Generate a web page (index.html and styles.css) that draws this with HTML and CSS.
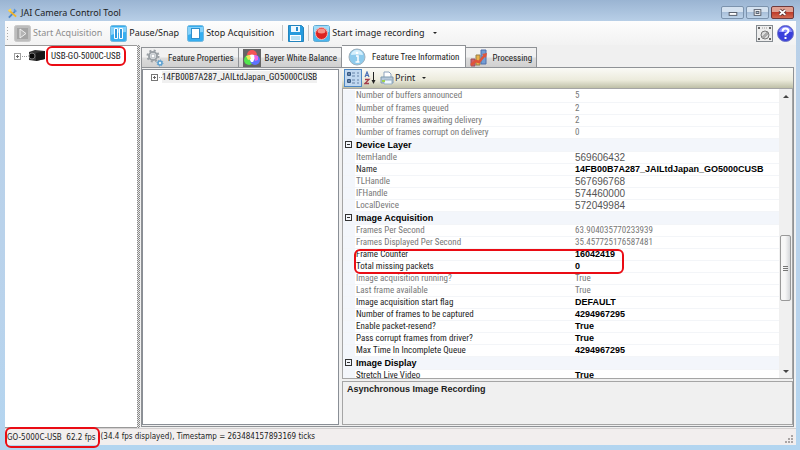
FILE: index.html
```html
<!DOCTYPE html>
<html lang="en">
<head>
<meta charset="utf-8">
<title>JAI Camera Control Tool</title>
<link rel="stylesheet" href="styles.css">
</head>
<body>
<div class="window">
  <header class="titlebar">
    <svg class="app-icon" viewBox="0 0 12 12"><path d="M2 11L9 4" stroke="#4f86c6" stroke-width="2"/><path d="M8 1l3 3-2 1-2-2z" fill="#5c96d6"/><path d="M2 3l8 7" stroke="#f0b429" stroke-width="2"/><path d="M1 3l3-2 1 2-2 2z" fill="#ffd34d"/></svg>
    <h1>JAI Camera Control Tool</h1>
    <div class="caption-buttons">
      <button aria-label="Minimize"><svg viewBox="0 0 22 11"><rect x="7.500" y="5.500" width="8" height="3" fill="#fff" stroke="#555c68"/></svg></button>
      <button aria-label="Maximize"><svg viewBox="0 0 22 11"><rect x="7.500" y="2.500" width="7" height="6" fill="#fff" stroke="#555c68"/><rect x="9.500" y="4.500" width="3" height="2" fill="#b9cee4" stroke="#555c68"/></svg></button>
      <button class="close" aria-label="Close"><svg viewBox="0 0 22 11"><path d="M8 3l6 5M14 3l-6 5" stroke="#5b3434" stroke-width="3.500"/><path d="M8 3l6 5M14 3l-6 5" stroke="#fff" stroke-width="2"/></svg></button>
    </div>
  </header>

  <div class="client">
    <nav class="toolbar" aria-label="Main">
      <span class="grip"></span>
      <button class="tool" disabled><svg viewBox="0 0 17 17"><rect x=".5" y=".5" width="16" height="16" rx="2" fill="#bdbdbd" stroke="#c9c9c9"/><rect x="3" y="3" width="11" height="11" fill="#a4a4a4"/><path d="M6 4v9l6-4.500z" fill="#b4b4b4" stroke="#eee"/></svg>Start Acquisition</button>
      <button class="tool"><svg viewBox="0 0 17 17"><rect x=".5" y=".5" width="16" height="16" rx="2" fill="#36aef0" stroke="#73b9df"/><path d="M1 2h15v5q-8 0-15 3z" fill="#85d2fb"/><path d="M4.500 3.500h3v10h-3zM9.500 3.500h3v10h-3z" fill="#3198db" stroke="#fff"/></svg>Pause/Snap</button>
      <button class="tool"><svg viewBox="0 0 17 17"><rect x=".5" y=".5" width="16" height="16" rx="2" fill="#36aef0" stroke="#73b9df"/><path d="M1 2h15v5q-8 0-15 3z" fill="#85d2fb"/><rect x="4.500" y="3.500" width="8" height="10" fill="#fff" stroke="#2f8fcc"/></svg>Stop Acquisition</button>
      <span class="sep"></span>
      <button class="tool" aria-label="Save"><svg viewBox="0 0 17 17"><path d="M1.500.5h13l2 2v14h-15z" fill="#279bdd" stroke="#2484bd"/><path d="M4 1h9v6H4z" fill="#eef9ff"/><path d="M9 2h2v4H9z" fill="#278acb"/><path d="M3 10h11v6H3z" fill="#fff"/><path d="M4 12h9M4 14h9" stroke="#72c3ea"/></svg></button>
      <span class="sep"></span>
      <button class="tool"><svg viewBox="0 0 17 17"><rect x=".5" y=".5" width="16" height="16" rx="2" fill="#4ab6ee" stroke="#5fa9d1"/><path d="M1 1h15v6H1z" fill="#9edcfa"/><circle cx="8.500" cy="8.500" r="6" fill="#dd2320" stroke="#f4b9b5"/><ellipse cx="8.500" cy="6" rx="4" ry="2.500" fill="#f69287"/></svg>Start image recording<span class="arrow"></span></button>
      <span class="spacer"></span>
      <button class="tool" aria-label="Settings"><svg viewBox="0 0 17 17"><rect x=".5" y=".5" width="16" height="16" fill="#eee" stroke="#858b90"/><circle cx="9" cy="10" r="4" fill="#ddd" stroke="#777"/><path d="M6.500 12l5-5M7.500 13l5-5" stroke="#777"/><path d="M2 3h2M13 3h2M2 14h2M13 14h2" stroke="#666" stroke-width="2"/><path d="M6 3h5" stroke="#999" stroke-dasharray="1 1"/></svg></button>
      <button class="tool" aria-label="Help"><svg viewBox="0 0 17 17"><circle cx="8.500" cy="8.500" r="8" fill="#3a3fdc" stroke="#7076c5"/><path d="M2 7a6.500 5.500 0 0 1 13 0z" fill="#898cff"/><path d="M5.500 6.500q0-3 3-3t3 2.500q0 1.500-3 3v1.500" fill="none" stroke="#fff" stroke-width="2"/><path d="M7.500 12h2v2h-2z" fill="#fff"/></svg></button>
    </nav>

    <main class="workspace">
      <aside class="devices">
        <div class="tree-item"><span class="expander"></span><svg class="camera" viewBox="0 0 18 12"><path d="M1 2l6-2 10 1v8l-9 2-7-1z" fill="#333"/><path d="M8 3l9-2v8l-9 2z" fill="#171717"/><circle cx="4" cy="6" r="3" fill="#090909" stroke="#777"/></svg><span class="marked">USB-GO-5000C-USB</span></div>
      </aside>
      <div class="splitter"></div>
      <section class="pages">
        <div class="tabs" role="tablist">
          <button role="tab" class="tab"><svg viewBox="0 0 18 18"><circle cx="7" cy="7" r="4" fill="#eceff1" stroke="#9aa0a5" stroke-width="2"/><circle cx="7" cy="7" r="5.500" fill="none" stroke="#9aa0a5" stroke-width="2" stroke-dasharray="2 2.320"/><circle cx="7" cy="7" r="2" fill="#fff" stroke="#b4b9be"/><circle cx="14" cy="14" r="2" fill="#e0f2fc" stroke="#5a9fd0" stroke-width="1.500"/><circle cx="14" cy="14" r="3" fill="none" stroke="#5a9fd0" stroke-dasharray="1 1.300"/></svg>Feature Properties</button>
          <button role="tab" class="tab"><svg viewBox="0 0 18 18"><path d="M0 0h18v18H0z" fill="#666"/><circle cx="9" cy="6" r="5" fill="#f45555"/><circle cx="6" cy="11" r="5" fill="#52e54e"/><circle cx="12" cy="11" r="5" fill="#5e74ff"/><path d="M5 7q4-3 8 0l-3 6H8z" fill="#fff"/><path d="M11 6l4 1v4l-3 1z" fill="#ee65e5"/><path d="M3 7l4-1 1 4-3 1z" fill="#f6e55b"/></svg>Bayer White Balance</button>
          <button role="tab" class="tab active" aria-selected="true"><svg viewBox="0 0 18 18"><circle cx="9" cy="9" r="8" fill="#8dcbed" stroke="#a1b2be"/><path d="M3 7a6 5 0 0 1 12 0q-6-1-12 0z" fill="#d5f0fd"/><path d="M8 8h2v6M7.500 14h4" fill="none" stroke="#fff" stroke-width="1.500"/><circle cx="9" cy="5" r="1.300" fill="#fff"/></svg>Feature Tree Information</button>
          <button role="tab" class="tab"><svg viewBox="0 0 18 18"><path d="M1 10h4v7H1z" fill="#d3606a" stroke="#985163"/><path d="M6 6h4v10H6z" fill="#ebb14a" stroke="#95804a"/><path d="M11 1h5v14h-5z" fill="#719ed5" stroke="#526fa9"/><path d="M1 16l5-4 3 1 6-7" fill="none" stroke="#df543a" stroke-width="2.500"/><path d="M12 5l5-1-1 5z" fill="#df543a"/></svg>Processing</button>
        </div>
        <div class="page">
          <div class="nodes"><div class="tree-item"><span class="expander dark"></span><span class="node">14FB00B7A287_JAILtdJapan_GO5000CUSB</span></div></div>
          <div class="inspector">
            <div class="gridbar">
              <button class="pressed" aria-label="Categorized"><svg viewBox="0 0 14 14"><path d="M1.500 1.500h3v3h-3zM1.500 8.500h3v3h-3z" fill="#fff" stroke="#365983"/><path d="M2 3h2M3 2v2M2 10h2M3 9v2" stroke="#365983"/><path d="M6 2h3M11 2h2M6 5h3M11 5h2M6 9h3M11 9h2M6 12h3M11 12h2" stroke="#6683a8"/></svg></button>
              <button aria-label="Sort alphabetically"><svg viewBox="0 0 14 14"><path d="M1 6l2-5 2 5M2 4.500h2" fill="none" stroke="#4b6fb5" stroke-width="1.200"/><path d="M1 8.500h4l-4 4h4" fill="none" stroke="#a33b49" stroke-width="1.300"/><path d="M9.500 1v10" stroke="#222"/><path d="M7.500 9h4l-2 4z" fill="#222"/></svg></button>
              <button class="print"><svg viewBox="0 0 14 14"><path d="M4 7V1h5l2 2v4" fill="#fff" stroke="#8da4bd"/><path d="M1 6h12v6H1z" fill="#b8cadb" stroke="#7f9aaf"/><path d="M4 9h8v4H4z" fill="#eff9ff" stroke="#98afc3"/><path d="M2 9h3v2H2z" fill="#9fd34d"/></svg>Print<span class="arrow"></span></button>
            </div>
            <div class="grid-box">
              <div class="rows">
                <div class="callout"></div>
                <table>
                  <colgroup><col class="c-gutter"><col class="c-name"><col></colgroup>
                  <tbody>
                    <tr class="ro"><td></td><td>Number of buffers announced</td><td>5</td></tr>
                    <tr class="ro"><td></td><td>Number of frames queued</td><td>2</td></tr>
                    <tr class="ro"><td></td><td>Number of frames awaiting delivery</td><td>2</td></tr>
                    <tr class="ro"><td></td><td>Number of frames corrupt on delivery</td><td>0</td></tr>
                    <tr class="cat"><td><span class="collapse"></span></td><th colspan="2">Device Layer</th></tr>
                    <tr class="ro strong"><td></td><td>ItemHandle</td><td>569606432</td></tr>
                    <tr><td></td><td>Name</td><td>14FB00B7A287_JAILtdJapan_GO5000CUSB</td></tr>
                    <tr class="ro strong"><td></td><td>TLHandle</td><td>567696768</td></tr>
                    <tr class="ro strong"><td></td><td>IFHandle</td><td>574460000</td></tr>
                    <tr class="ro strong"><td></td><td>LocalDevice</td><td>572049984</td></tr>
                    <tr class="cat"><td><span class="collapse"></span></td><th colspan="2">Image Acquisition</th></tr>
                    <tr class="ro"><td></td><td>Frames Per Second</td><td>63.904035770233939</td></tr>
                    <tr class="ro"><td></td><td>Frames Displayed Per Second</td><td>35.457725176587481</td></tr>
                    <tr><td></td><td>Frame Counter</td><td>16042419</td></tr>
                    <tr><td></td><td>Total missing packets</td><td>0</td></tr>
                    <tr class="ro"><td></td><td>Image acquisition running?</td><td>True</td></tr>
                    <tr class="ro"><td></td><td>Last frame available</td><td>True</td></tr>
                    <tr><td></td><td>Image acquisition start flag</td><td>DEFAULT</td></tr>
                    <tr><td></td><td>Number of frames to be captured</td><td>4294967295</td></tr>
                    <tr><td></td><td>Enable packet-resend?</td><td>True</td></tr>
                    <tr><td></td><td>Pass corrupt frames from driver?</td><td>True</td></tr>
                    <tr><td></td><td>Max Time In Incomplete Queue</td><td>4294967295</td></tr>
                    <tr class="cat"><td><span class="collapse"></span></td><th colspan="2">Image Display</th></tr>
                    <tr><td></td><td>Stretch Live Video</td><td>True</td></tr>
                  </tbody>
                </table>
              </div>
              <div class="scrollbar"><span class="up"></span><span class="track-top"></span><span class="thumb"></span><span class="track-bottom"></span><span class="down"></span></div>
            </div>
            <div class="description">Asynchronous Image Recording</div>
          </div>
        </div>
      </section>
    </main>

    <footer class="status">
      <span class="fps">GO-5000C-USB&nbsp; 62.2 fps</span><span>(34.4 fps displayed), Timestamp = 263484157893169 ticks</span>
      <svg class="size-grip" viewBox="0 0 9 9"><path d="M6 1h2M3 4h2M6 4h2M0 7h2M3 7h2M6 7h2" stroke="#aaa5a5" stroke-width="2"/></svg>
    </footer>
  </div>
</div>
</body>
</html>
```
FILE: styles.css
```css
* { box-sizing: border-box; }
body {
  margin: 0;
  font: 9px/12px "Roboto Condensed", "Liberation Sans", sans-serif;
  color: #1c1c1c;
}
button {
  font: inherit;
  color: inherit;
  background: none;
  border: 0;
  margin: 0;
  padding: 0;
  display: flex;
  align-items: center;
}
svg { flex: none; }
.window {
  height: 100vh;
  display: flex;
  flex-direction: column;
  padding: 0 4px 5px 5px;
  background: linear-gradient(#9ab4d2 0, #b9d0e8 22px, #b9d3ec 70%, #b3d5f0);
  overflow: hidden;
}
.titlebar {
  height: 21px;
  flex: none;
  display: flex;
  align-items: center;
  gap: 3px;
  padding: 4px 2px 0 2px;
}
.app-icon { width: 11px; height: 12px; }
h1 {
  margin: 0;
  flex: 1;
  font: 9px/12px "Noto Sans", sans-serif;
}
.caption-buttons { display: flex; gap: 2px; }
.caption-buttons button {
  width: 23px;
  height: 13px;
  border: 1px solid #7c93ad;
  border-radius: 2px;
  background: linear-gradient(#d5e2f0 45%, #a9c0da 50%, #bdd3e9);
}
.caption-buttons svg { width: 21px; height: 11px; }
.caption-buttons .close {
  border-color: #6e3a3c;
  background: linear-gradient(#e0a193 45%, #bf3d2b 50%, #d26a52);
}
.client {
  flex: 1;
  min-height: 0;
  display: flex;
  flex-direction: column;
  background: #f0f0f0;
}
.toolbar {
  height: 24px;
  flex: none;
  display: flex;
  align-items: center;
  padding: 0 2px;
  background: linear-gradient(#fdfdfd, #f2f2f2);
  font: 9px/12px "Noto Sans", sans-serif;
}
.grip {
  width: 1px;
  height: 13px;
  margin-right: 6px;
  background: repeating-linear-gradient(#aaa 0 1px, transparent 1px 3px);
}
.tool { gap: 2px; margin-right: 8px; }
.tool svg { width: 17px; height: 17px; }
.tool:disabled { color: #8c8c8c; }
.tool[aria-label] { margin-right: 4px; }
.tool:last-child { margin-right: 0; }
.sep { width: 1px; height: 16px; margin-right: 4px; background: #c6c6c6; }
.arrow {
  margin-left: 6px;
  border: 2px solid transparent;
  border-top-color: #222;
  border-bottom: 0;
}
.spacer { flex: 1; }
.workspace { flex: 1; min-height: 0; display: flex; }
.devices {
  flex: 0 0 132px;
  background: #fff;
  border-top: 1px solid #999;
  border-bottom: 1px solid #999;
  padding: 0 8px;
}
.splitter {
  width: 3px;
  background: repeating-conic-gradient(#888 0 25%, #e8e8e8 0 50%) 0 0 / 2px 2px;
}
.pages {
  flex: 1;
  min-width: 0;
  display: flex;
  flex-direction: column;
  padding: 0 2px 1px 1px;
}
.tree-item { display: flex; align-items: center; white-space: nowrap; }
.expander {
  width: 7px;
  height: 7px;
  flex: none;
  border: 1px solid #a0a0a0;
  margin: 0 7px 0 1px;
  position: relative;
  background:
    linear-gradient(#666, #666) center / 3px 1px no-repeat,
    linear-gradient(#666, #666) center / 1px 3px no-repeat;
}
.expander::after {
  content: "";
  position: absolute;
  left: 7px;
  top: 2px;
  width: 5px;
  border-top: 1px dotted #999;
}
.expander.dark { margin-right: 4px; border-color: #777; }
.expander.dark::after { width: 3px; }
.camera { width: 18px; height: 12px; }
.marked {
  border: 2px solid #ea0c14;
  border-radius: 6px;
  padding: 1px 3px;
  line-height: 14px;
}
.tabs { display: flex; align-items: flex-end; height: 22px; flex: none; }
.tab {
  height: 20px;
  gap: 4px;
  padding: 0 4px;
  white-space: nowrap;
  border: 1px solid #8f9296;
  border-left-width: 0;
  border-bottom: 0;
  background: linear-gradient(#f1f1f1 48%, #dcdcdc 52%, #d0d0d0);
}
.tab svg { width: 18px; height: 18px; }
.tab:first-child { border-left-width: 1px; }
.tab.active { height: 22px; gap: 6px; padding: 0 6px; background: #fff; }
.page {
  flex: 1;
  min-height: 0;
  display: flex;
  gap: 3px;
  border: 1px solid #8f9296;
  background: #f0f0f0;
}
.nodes {
  flex: 0 0 197px;
  background: #fff;
  border: 1px solid #8a8f96;
  margin: 1px 0 1px;
  padding: 1px 7px;
}
.node { background: #f0f0f0; }
.inspector {
  flex: 1;
  min-width: 0;
  display: flex;
  flex-direction: column;
  padding-bottom: 1px;
}
.gridbar {
  flex: none;
  height: 20px;
  display: flex;
  align-items: center;
  gap: 2px;
  padding-left: 2px;
  background: linear-gradient(#fafaf6, #ecebdc 60%, #bfc0a8);
  font: 9px/12px "Noto Sans", sans-serif;
}
.gridbar svg { width: 14px; height: 14px; }
.gridbar .pressed { padding: 1px; border: 1px solid #4d88c4; background: #c1d8f0; }
.gridbar .print { gap: 1px; }
.grid-box {
  flex: 1;
  min-height: 0;
  display: flex;
  overflow: hidden;
  border: 1px solid #a5a5a5;
  background: #fff;
}
.rows { flex: 1; min-width: 0; overflow: hidden; position: relative; padding-top: 1px; }
table { width: 100%; table-layout: fixed; border-collapse: collapse; }
.c-gutter { width: 12px; }
.c-name { width: 219px; }
td, th {
  height: 12px;
  line-height: 11px;
  padding: 0 0 0 1px;
  text-align: left;
  white-space: nowrap;
  border-bottom: 1px solid #f3f5f8;
}
td:first-child { background: #f3f6fb; padding: 0; }
td:last-child, th { font-family: "Liberation Sans", sans-serif; font-weight: bold; color: #000; }
.ro td { color: #777; }
.ro td:last-child { font-family: "Roboto Condensed", "Liberation Sans", sans-serif; font-weight: normal; color: #777; }
.ro.strong td:last-child { font-family: "Liberation Sans", sans-serif; font-size: 10px; color: #555; }
.cat th, .cat td { height: 13px; line-height: 12px; background: #f3f6fb; }
.collapse {
  display: block;
  width: 7px;
  height: 7px;
  margin-left: 2px;
  border: 1px solid #333;
  background: linear-gradient(#333, #333) center / 3px 1px no-repeat;
}
.callout {
  position: absolute;
  left: 11px;
  top: 160px;
  width: 270px;
  height: 25px;
  border: 2px solid #ea0c14;
  border-radius: 6px;
}
.scrollbar {
  width: 13px;
  display: flex;
  flex-direction: column;
  align-items: center;
  background: #f0f0f0;
  padding: 6px 0 5px;
}
.up, .down { border: 3px solid transparent; }
.up { border-top: 0; border-bottom-color: #444; }
.down { border-bottom: 0; border-top-color: #444; }
.track-top { flex: 137; }
.track-bottom { flex: 69; }
.thumb {
  flex: 64;
  width: 11px;
  border: 1px solid #999;
  border-radius: 2px;
  background:
    repeating-linear-gradient(#777 0 1px, transparent 1px 2px) center / 5px 5px no-repeat,
    linear-gradient(90deg, #f7f7f7 45%, #d5d7da);
}
.description {
  flex: none;
  height: 44px;
  margin-top: 2px;
  padding: 1px 4px;
  border: 1px solid #a5a5a5;
  font-family: "Liberation Sans", sans-serif;
  font-weight: bold;
}
.status {
  height: 17px;
  flex: none;
  display: flex;
  align-items: center;
  gap: 1px;
  border-top: 1px solid #d3d0d0;
  background: #f2eeee;
  font: 8px/12px "DejaVu Sans Condensed", "DejaVu Sans", sans-serif;
  white-space: nowrap;
}
.fps {
  border: 2px solid #ea0c14;
  border-radius: 6px;
  padding-right: 2px;
  line-height: 17px;
  position: relative;
}
.size-grip { width: 9px; height: 9px; margin: 4px 2px 0 auto; }
```
